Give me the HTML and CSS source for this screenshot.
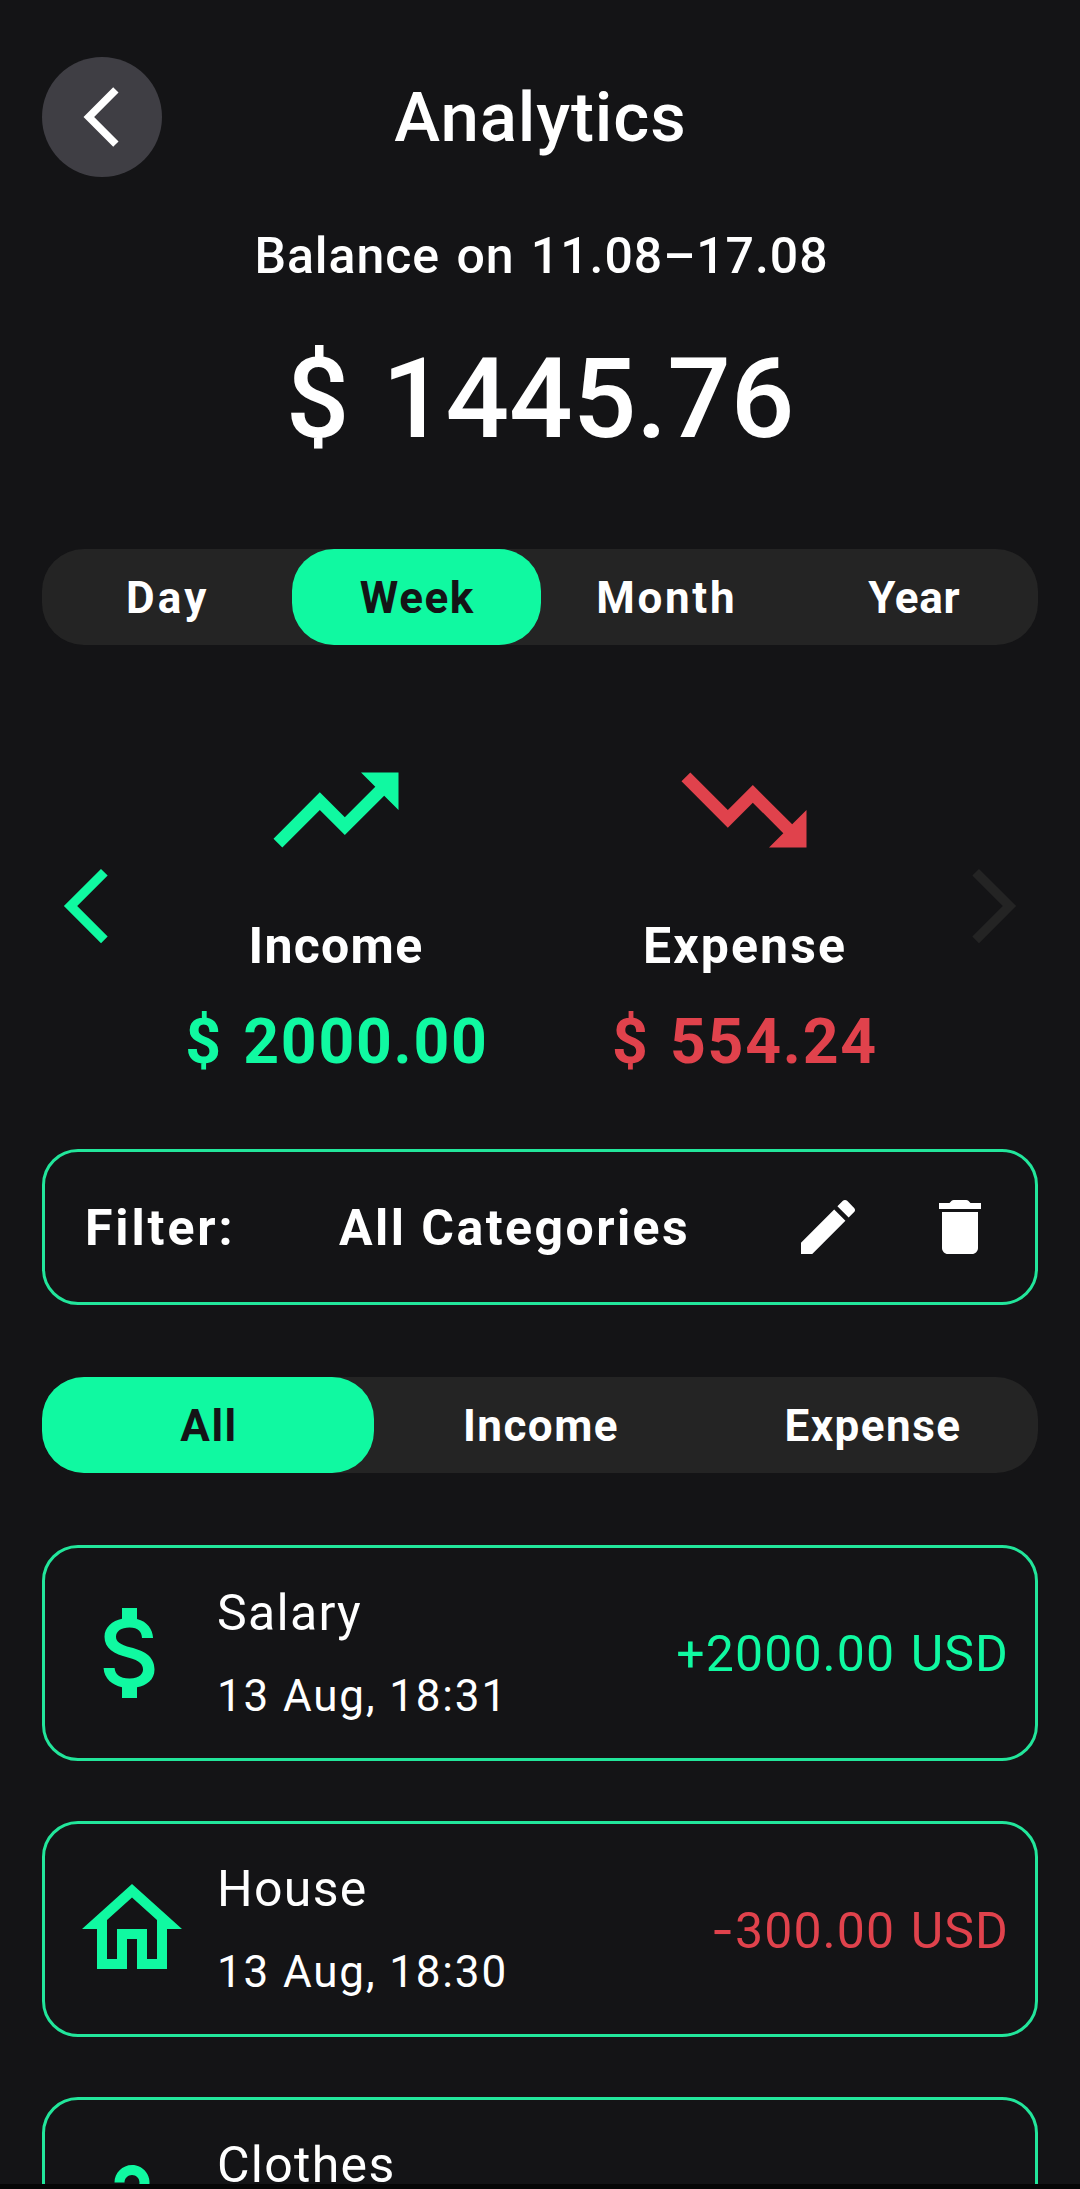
FILE: index.html
```html
<!DOCTYPE html>
<html lang="en">
<head>
<meta charset="utf-8">
<title>Analytics</title>
<link rel="stylesheet" href="styles.css">
</head>
<body>
<main class="screen">
  <header class="header">
    <button class="back" aria-label="Back">
      <svg class="icon-72" viewBox="0 0 24 24"><path d="M17.51 3.87 15.73 2.1 5.84 12l9.9 9.9 1.77-1.77L9.38 12z"/></svg>
    </button>
    <h1 class="title">Analytics</h1>
  </header>

  <p class="period">Balance on 11.08–17.08</p>
  <p class="balance">$ 1445.76</p>

  <nav class="tabs">
    <button class="tab tab-day">Day</button>
    <button class="tab tab-active">Week</button>
    <button class="tab tab-month">Month</button>
    <button class="tab tab-year">Year</button>
  </nav>

  <section class="summary">
    <button class="step" aria-label="Previous week">
      <svg class="icon-90" viewBox="0 0 24 24"><path d="M17.51 3.87 15.73 2.1 5.84 12l9.9 9.9 1.77-1.77L9.38 12z"/></svg>
    </button>
    <div class="total">
      <svg class="icon-150 green" viewBox="0 0 24 24"><path d="m16 6 2.29 2.29-4.88 4.88-4-4L2 16.59 3.41 18l6-6 4 4 6.3-6.29L22 12V6z"/></svg>
      <span class="total-label label-income">Income</span>
      <span class="total-value green">$ 2000.00</span>
    </div>
    <div class="total">
      <svg class="icon-150 red" viewBox="0 0 24 24"><path d="m16 18 2.29-2.29-4.88-4.88-4 4L2 7.41 3.41 6l6 6 4-4 6.3 6.29L22 12v6z"/></svg>
      <span class="total-label">Expense</span>
      <span class="total-value red">$ 554.24</span>
    </div>
    <button class="step step-off" aria-label="Next week">
      <svg class="icon-90" viewBox="0 0 24 24"><path d="m6.49 20.13 1.77 1.77 9.9-9.9-9.9-9.9-1.77 1.77L14.62 12z"/></svg>
    </button>
  </section>

  <section class="filter">
    <span class="filter-label">Filter:</span>
    <span class="filter-value">All Categories</span>
    <svg class="icon-72" viewBox="0 0 24 24"><path d="M3 17.25V21h3.75L17.81 9.94l-3.75-3.75L3 17.25zM20.71 7.04c.39-.39.39-1.02 0-1.41l-2.34-2.34c-.39-.39-1.02-.39-1.41 0l-1.83 1.83 3.75 3.75 1.83-1.83z"/></svg>
    <svg class="icon-72 filter-clear" viewBox="0 0 24 24"><path d="M6 19c0 1.1.9 2 2 2h8c1.1 0 2-.9 2-2V7H6v12zM18 4h-2.5l-.71-.71c-.18-.18-.44-.29-.7-.29H9.91c-.26 0-.52.11-.7.29L8.5 4H5v2h14V4h-1z"/></svg>
  </section>

  <nav class="tabs">
    <button class="tab tab-active">All</button>
    <button class="tab">Income</button>
    <button class="tab">Expense</button>
  </nav>

  <section class="list">
    <article class="entry">
      <svg class="icon-120" viewBox="0 0 24 24"><path d="M11.8 10.9c-2.27-.59-3-1.2-3-2.15 0-1.09 1.01-1.85 2.7-1.85 1.78 0 2.44.85 2.5 2.1h2.21c-.07-1.72-1.12-3.3-3.21-3.81V3h-3v2.16c-1.94.42-3.5 1.68-3.5 3.61 0 2.31 1.91 3.46 4.7 4.13 2.5.6 3 1.48 3 2.41 0 .69-.49 1.79-2.7 1.79-2.06 0-2.87-.92-2.98-2.1h-2.2c.12 2.19 1.76 3.42 3.68 3.83V21h3v-2.15c1.95-.37 3.5-1.5 3.5-3.55 0-2.84-2.43-3.81-4.7-4.4z"/></svg>
      <div class="entry-text">
        <span class="entry-name">Salary</span>
        <span class="entry-date">13 Aug, 18:31</span>
      </div>
      <span class="entry-amount green">+2000.00 USD</span>
    </article>
    <article class="entry">
      <svg class="icon-120" viewBox="0 0 24 24"><path d="M12 5.69l5 4.5V18h-2v-6H9v6H7v-7.81l5-4.5M12 3 2 12h3v8h6v-6h2v6h6v-8h3L12 3z"/></svg>
      <div class="entry-text">
        <span class="entry-name">House</span>
        <span class="entry-date">13 Aug, 18:30</span>
      </div>
      <span class="entry-amount red"><span class="sign">-</span>300.00 USD</span>
    </article>
    <article class="entry">
      <svg class="icon-120" viewBox="0 0 24 24"><path d="M21.6 18.2 13 11.75v-.91c1.65-.49 2.8-2.17 2.43-4.05-.26-1.31-1.3-2.4-2.61-2.7C10.54 3.57 8.5 5.3 8.5 7.5h2c0-.83.67-1.5 1.5-1.5s1.5.67 1.5 1.5c0 .84-.69 1.52-1.53 1.5-.54-.01-.97.45-.97.99v1.76L2.4 18.2c-.77.58-.36 1.8.6 1.8h18c.96 0 1.37-1.22.6-1.8zM6 18l6-4.5 6 4.5H6z"/></svg>
      <div class="entry-text">
        <span class="entry-name">Clothes</span>
      </div>
    </article>
  </section>
</main>
</body>
</html>
```
FILE: styles.css
```css
* { box-sizing: border-box; }

body {
  margin: 0;
  background: #060606;
  color: #fff;
  font-family: Roboto, "Liberation Sans", sans-serif;
}

h1, p { margin: 0; font-weight: 500; }

button {
  border: 0;
  padding: 0;
  background: none;
  color: inherit;
  font: inherit;
}

svg { display: block; flex: none; fill: currentColor; }

.icon-72 { width: 72px; height: 72px; }
.icon-90 { width: 90px; height: 90px; }
.icon-120 { width: 120px; height: 120px; color: #10f9a1; }
.icon-150 { width: 150px; height: 150px; }

.green { color: #10f9a1; }
.red { color: #e0424c; }

.screen {
  width: 1080px;
  height: 2184px;
  overflow: hidden;
  padding: 57px 42px 0;
  background: #141416;
}

.header {
  display: grid;
  grid-template-columns: 120px 1fr 120px;
  align-items: center;
}

.back {
  display: grid;
  place-items: center;
  width: 120px;
  height: 120px;
  border-radius: 50%;
  background: #3f3e44;
}

.title {
  padding: 2px 0 0 1px;
  font-size: 69px;
  line-height: 80px;
  letter-spacing: 0.9px;
  text-align: center;
}

.period {
  margin-top: 49px;
  padding-left: 3px;
  font-size: 50px;
  line-height: 60px;
  letter-spacing: 0.95px;
  word-spacing: 3px;
  text-align: center;
}

.balance {
  margin-top: 47px;
  font-size: 112px;
  line-height: 132px;
  letter-spacing: -0.1px;
  word-spacing: 5px;
  text-align: center;
}

.tabs {
  display: flex;
  height: 96px;
  margin-top: 84px;
  border-radius: 42px;
  background: #242424;
}

.tab {
  flex: 1;
  padding: 1px 0 0 2px;
  border-radius: 42px;
  font-size: 44px;
  font-weight: 700;
  letter-spacing: 1.5px;
}

.tab-active { background: #10f9a1; color: #141416; }
.tab-day { letter-spacing: 3.1px; }
.tab-month { letter-spacing: 2.7px; }
.tab-year { padding-left: 0; letter-spacing: 0.7px; }

.summary {
  display: grid;
  grid-template-columns: 90px 1fr 1fr 90px;
  margin-top: 90px;
}

.step { align-self: start; margin-top: 126px; color: #10f9a1; }
.step-off { color: #242424; }

.total {
  display: flex;
  flex-direction: column;
  align-items: center;
  font-weight: 700;
}

.total-label {
  margin-top: 31px;
  padding-left: 2px;
  font-size: 50px;
  line-height: 60px;
  letter-spacing: 2.1px;
}

.label-income { padding-left: 0; letter-spacing: 1.3px; }

.total-value {
  margin-top: 29px;
  padding-left: 2px;
  font-size: 62.5px;
  line-height: 74px;
  letter-spacing: 1.75px;
  word-spacing: 3px;
}

.filter {
  display: grid;
  grid-template-columns: 254px 453px 72px 1fr;
  align-items: center;
  height: 156px;
  margin-top: 70px;
  padding: 0 39px 0 40px;
  border: 3px solid #22e69b;
  border-radius: 36px;
  font-size: 50px;
  font-weight: 700;
}

.filter-label { padding-top: 2px; letter-spacing: 2.9px; }
.filter-value { padding-top: 2px; letter-spacing: 2.45px; }
.filter-clear { justify-self: end; }

.filter + .tabs { margin-top: 72px; }

.list {
  display: flex;
  flex-direction: column;
  gap: 60px;
  margin-top: 72px;
}

.entry {
  display: flex;
  align-items: center;
  flex: none;
  height: 216px;
  padding: 0 26px 0 27px;
  border: 3px solid #22e69b;
  border-radius: 36px;
}

.entry-text {
  display: grid;
  grid-template-rows: 60px 54px;
  row-gap: 26px;
  margin-left: 25px;
}

.entry-name { font-size: 50px; line-height: 60px; letter-spacing: 1.3px; }
.entry-date { font-size: 44px; line-height: 54px; letter-spacing: 1.85px; }

.entry-amount {
  margin-left: auto;
  padding-top: 2px;
  font-size: 50px;
  line-height: 60px;
  letter-spacing: 1.1px;
  word-spacing: 2px;
}

.sign { font-family: Inter, sans-serif; }
```
